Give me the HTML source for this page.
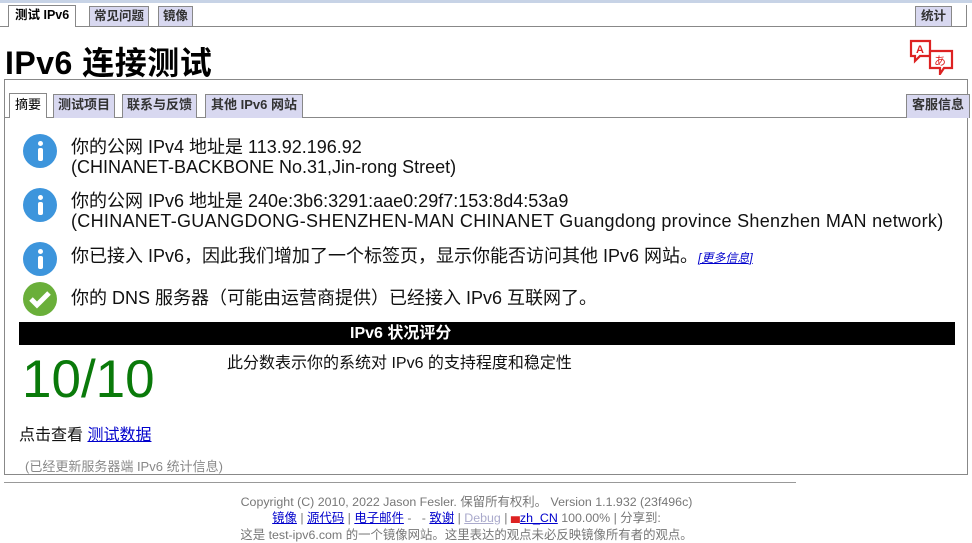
<!DOCTYPE html>
<html><head><meta charset="utf-8"><style>
body{margin:0;width:972px;height:543px;background:#fff;font-family:"Liberation Sans","Noto Sans CJK SC",sans-serif;color:#111;position:relative;overflow:hidden}
.a{position:absolute}
.tab{position:absolute;font-size:12.5px;background:#d8d8f0;border:1px solid #888;border-bottom:none;color:#333;padding:0 5px;height:19px;line-height:19px;font-weight:bold;white-space:nowrap}
.tab.on{background:#fff;color:#000;height:21px}
.t{position:absolute;font-size:18px;white-space:nowrap;color:#111}
.ic{position:absolute;width:34px;height:34px;border-radius:50%;background:#3d95dc}
.ic:before{content:"";position:absolute;left:15px;top:7px;width:5px;height:5px;border-radius:50%;background:#fff}
.ic:after{content:"";position:absolute;left:15px;top:14px;width:5px;height:13px;border-radius:2px;background:#fff}
.ok{position:absolute;width:34px;height:34px;border-radius:50%;background:#6aaf3a}
</style></head><body>
<div class="a" style="left:0;top:0;width:972px;height:3px;background:#c7d3e6"></div>
<div class="a" style="left:0;top:26px;width:967px;height:1px;background:#888"></div>
<div class="a" style="left:966px;top:5px;width:1px;height:22px;background:#888"></div>
<div class="tab on" style="left:8px;top:5px;padding:0 6px">测试 IPv6</div>
<div class="tab" style="left:89px;top:6px;padding:0 4px">常见问题</div>
<div class="tab" style="left:158px;top:6px;padding:0 4px">镜像</div>
<div class="tab" style="left:915px;top:6px;padding:0 5px">统计</div>
<div class="a" style="left:5px;top:38px;font-size:32px;font-weight:bold;color:#000;letter-spacing:0.5px">IPv6 连接测试</div>
<svg class="a" style="left:908px;top:39px" width="48" height="36" viewBox="0 0 48 36"><path d="M3 2h19v15H12l-5 5v-5H3z" fill="#fff" stroke="#d22" stroke-width="2.2"/><text x="8" y="14" font-size="11" font-weight="bold" fill="#d22" font-family="Liberation Sans">A</text><path d="M22 12h22v17h-8l-4 6v-6H22z" fill="#fff" stroke="#d22" stroke-width="2.2"/><text x="26" y="26" font-size="12" fill="#d22" font-family="Noto Sans CJK JP">あ</text></svg>
<div class="a" style="left:4px;top:79px;width:962px;height:394px;border:1px solid #888"></div>
<div class="a" style="left:5px;top:117px;width:962px;height:1px;background:#888"></div>
<div class="tab on" style="left:9px;top:93px;font-weight:normal;height:24px;line-height:21px;font-size:13px;padding:0 5px">摘要</div>
<div class="tab" style="left:53px;top:94px;height:23px;line-height:20px;font-size:13px;padding:0 4px">测试项目</div>
<div class="tab" style="left:122px;top:94px;height:23px;line-height:20px;font-size:13px;padding:0 4px">联系与反馈</div>
<div class="tab" style="left:205px;top:94px;height:23px;line-height:20px;font-size:13px;padding:0 5px">其他 IPv6 网站</div>
<div class="tab" style="left:906px;top:94px;height:23px;line-height:20px;font-size:13px">客服信息</div>
<div class="ic" style="left:23px;top:134px"></div>
<div class="t" style="left:71px;top:133px">你的公网 IPv4 地址是 113.92.196.92</div>
<div class="t" style="left:71px;top:157px">(CHINANET-BACKBONE No.31,Jin-rong Street)</div>
<div class="ic" style="left:23px;top:188px"></div>
<div class="t" style="left:71px;top:187px">你的公网 IPv6 地址是 240e:3b6:3291:aae0:29f7:153:8d4:53a9</div>
<div class="t" style="left:71px;top:211px;letter-spacing:0.3px">(CHINANET-GUANGDONG-SHENZHEN-MAN CHINANET Guangdong province Shenzhen MAN network)</div>
<div class="ic" style="left:23px;top:242px"></div>
<div class="t" style="left:71px;top:242px">你已接入 IPv6，因此我们增加了一个标签页，显示你能否访问其他 IPv6 网站。<i style="font-size:12px;color:#00c;text-decoration:underline">[更多信息]</i></div>
<div class="ok" style="left:23px;top:282px"></div>
<svg class="a" style="left:23px;top:282px" width="34" height="34"><path d="M8 17l6 6 12-12" stroke="#fff" stroke-width="5" fill="none"/></svg>
<div class="t" style="left:71px;top:284px">你的 DNS 服务器（可能由运营商提供）已经接入 IPv6 互联网了。</div>
<div class="a" style="left:19px;top:322px;width:936px;height:23px;background:#000"></div>
<div class="a" style="left:350px;top:322px;color:#fff;font-weight:bold;font-size:16px;line-height:23px;white-space:nowrap">IPv6 状况评分</div>
<div class="t" style="left:227px;top:349px;font-size:16px">此分数表示你的系统对 IPv6 的支持程度和稳定性</div>
<div class="a" style="left:22px;top:349px;font-size:53px;color:#0a7a0a">10/10</div>
<div class="t" style="left:19px;top:421px;font-size:16px">点击查看 <span style="color:#00c;text-decoration:underline">测试数据</span></div>
<div class="t" style="left:25px;top:456px;font-size:13px;color:#888">(已经更新服务器端 IPv6 统计信息)</div>
<div class="a" style="left:4px;top:482px;width:792px;height:1px;background:#999"></div>
<div class="a" style="left:0;top:494px;width:933px;text-align:center;font-size:12.4px;color:#777;line-height:16px">Copyright (C) 2010, 2022 Jason Fesler. 保留所有权利。 Version 1.1.932 (23f496c)<br><span style="color:#00c;text-decoration:underline">镜像</span> | <span style="color:#00c;text-decoration:underline">源代码</span> | <span style="color:#00c;text-decoration:underline">电子邮件</span> - &nbsp; - <span style="color:#00c;text-decoration:underline">致谢</span> | <span style="color:#aac;text-decoration:underline">Debug</span> | <span style="color:#d22;font-size:9px">▆</span><span style="color:#00c;text-decoration:underline">zh_CN</span> 100.00% | 分享到:<br>这是 test-ipv6.com 的一个镜像网站。这里表达的观点未必反映镜像所有者的观点。</div>
</body></html>
